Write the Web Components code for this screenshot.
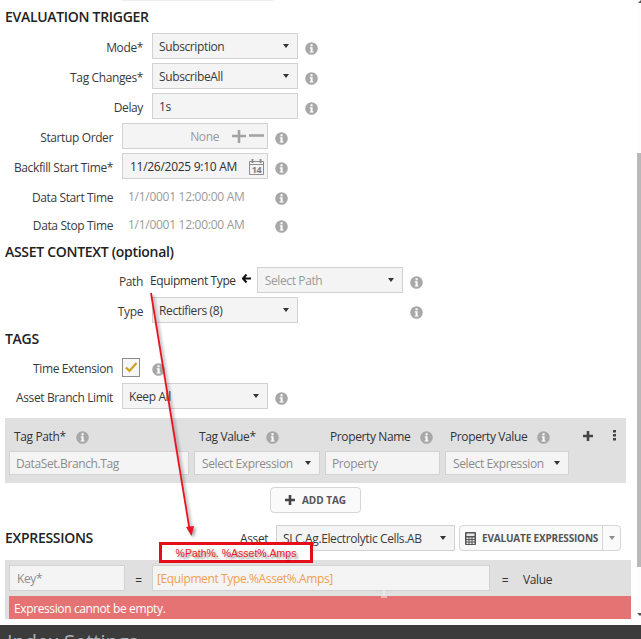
<!DOCTYPE html>
<html>
<head>
<meta charset="utf-8">
<title>Evaluation trigger</title>
<style>
  html, body { margin: 0; padding: 0; background: #fff; }
  body { width: 641px; height: 639px; overflow: hidden; }
</style>
</head>
<body>
<form-app></form-app>

<template id="form-app-tpl">
  <style>
    :host {
      display: flex;
      flex-direction: column;
      position: relative;
      width: 641px;
      height: 639px;
      overflow: hidden;
      background: #fff;
      color: #333;
      font: 12px/16px "Open Sans", "Noto Sans", sans-serif;
      letter-spacing: -0.38px;
    }
    .top { display: flex; height: 625px; }
    .main { width: 637px; }
    .edge { width: 151px; height: 1px; margin-left: 122px; background: #ececec; }
    .g4 { margin-top: 4px; }
    .value { width: 146px; padding-left: 6px; box-sizing: border-box; color: #9a9a9a; letter-spacing: -0.28px; position: relative; top: 1px; }
    .path-text { margin-left: -2px; white-space: nowrap; color: #333; position: relative; top: 1px; }
    .arrow { margin: -4px 6px 0 6px; flex: none; }
    .expr-row { display: flex; align-items: center; height: 26px; margin: 12px 0 0 5px; }
    .expr-row form-heading { width: 235px; margin: 0; }
    .asset { width: 36px; position: relative; top: 1px; }
    .tools { display: flex; justify-content: center; width: 621px; margin: 4px 0 0 5px; }
    .none { margin-right: 12px; color: #999; }
    .stepper { flex: none; margin-right: -2px; }
    .cal { flex: none; margin-right: -2px; }
    .check { width: 18px; height: 19px; box-sizing: border-box; border: 1px solid #8c8c8c; background: #f7f7f7; display: flex; align-items: center; justify-content: center; }
  </style>
  <div class="top">
    <div class="main">
      <div class="edge"></div>
      <form-heading style="margin-top:6px">EVALUATION TRIGGER</form-heading>

      <form-row label="Mode*" style="margin-top:6px"><field-box caret>Subscription</field-box><info-icon></info-icon></form-row>
      <form-row label="Tag Changes*" class="g4"><field-box caret>SubscribeAll</field-box><info-icon></info-icon></form-row>
      <form-row label="Delay" class="g4"><field-box>1s</field-box><info-icon></info-icon></form-row>
      <form-row narrow label="Startup Order" class="g4">
        <field-box end>
          <span class="none">None</span>
          <svg class="stepper" width="34" height="16" viewBox="0 0 34 16"><path d="M1 7h14M8 1v13" stroke="#a3a3a3" stroke-width="2.6" fill="none"/><path d="M18 6.5h15" stroke="#a3a3a3" stroke-width="2.6" fill="none"/></svg>
        </field-box>
        <info-icon></info-icon>
      </form-row>
      <form-row narrow label="Backfill Start Time*" class="g4">
        <field-box style="--text:#2f2f2f;--pad:7px;letter-spacing:-0.28px" end>
          <span style="margin-right:auto">11/26/2025 9:10 AM</span>
          <svg class="cal" width="17" height="18" viewBox="0 0 17 18"><path d="M1.5 3.5h14v13h-14z M1.5 6.5h14" fill="#f4f4f4" stroke="#8d8d8d"/><path d="M4.5 1v4M12.5 1v4" stroke="#8d8d8d" stroke-width="2"/><text x="8.5" y="15" text-anchor="middle" font-size="9" font-weight="700" font-family="Open Sans, sans-serif" fill="#7d7d7d">14</text></svg>
        </field-box>
        <info-icon></info-icon>
      </form-row>
      <form-row narrow label="Data Start Time" style="margin-top:4px"><span class="value">1/1/0001 12:00:00 AM</span><info-icon></info-icon></form-row>
      <form-row narrow label="Data Stop Time" style="margin-top:2px"><span class="value">1/1/0001 12:00:00 AM</span><info-icon></info-icon></form-row>

      <form-heading style="margin-top:5px">ASSET CONTEXT (optional)</form-heading>
      <form-row label="Path" style="margin-top:5px">
        <span class="path-text">Equipment Type</span>
        <svg class="arrow" width="9" height="9" viewBox="0 0 9 9"><path d="M4.5 .5 1 4.5l3.5 4M1.5 4.5H9" fill="none" stroke="#111" stroke-width="2"/></svg>
        <field-box caret style="--text:#9a9a9a;--pad:7px">Select Path</field-box><info-icon></info-icon>
      </form-row>
      <form-row label="Type" class="g4"><field-box caret>Rectifiers (8)</field-box><info-icon style="margin-left:112px"></info-icon></form-row>

      <form-heading style="margin-top:6px">TAGS</form-heading>
      <form-row narrow label="Time Extension" style="margin-top:5px">
        <div class="check"><svg width="14" height="12" viewBox="0 0 14 12"><path d="M2 6.5 5.5 10 12.5 2" fill="none" stroke="#cfa214" stroke-width="2.2"/></svg></div>
        <info-icon style="margin-left:12px"></info-icon>
      </form-row>
      <form-row narrow label="Asset Branch Limit" style="margin-top:3px"><field-box caret>Keep All</field-box><info-icon></info-icon></form-row>

      <tag-panel style="margin-top:9px">
        <tag-col label="Tag Path*"><field-box style="--h:24px;--text:#8c8c8c">DataSet.Branch.Tag</field-box></tag-col>
        <tag-col label="Tag Value*"><field-box caret style="--h:24px;--text:#8c8c8c;--pad:7px">Select Expression</field-box></tag-col>
        <tag-col label="Property Name"><field-box style="--h:24px;--text:#8c8c8c">Property</field-box></tag-col>
        <tag-col label="Property Value"><field-box caret style="--h:24px;--text:#8c8c8c;--pad:7px">Select Expression</field-box></tag-col>
      </tag-panel>

      <div class="tools"><add-button>ADD TAG</add-button></div>

      <div class="expr-row">
        <form-heading>EXPRESSIONS</form-heading>
        <span class="asset">Asset</span>
        <field-box caret style="--w:179px">SLC.Ag.Electrolytic Cells.AB</field-box>
        <split-button style="margin-left:4px">EVALUATE EXPRESSIONS</split-button>
      </div>

      <expr-panel style="margin-top:9px">Expression cannot be empty.</expr-panel>
    </div>
    <fake-scrollbar></fake-scrollbar>
  </div>
  <app-footer></app-footer>

  <callout-arrow></callout-arrow>
  <callout-box>%Path%. %Asset%.Amps</callout-box>
</template>

<script>
function makeShadow(el, html) {
  el.attachShadow({ mode: 'open' });
  el.shadowRoot.innerHTML = html;
}

class FormApp extends HTMLElement {
  constructor() {
    super();
    this.attachShadow({ mode: 'open' });
    this.shadowRoot.appendChild(document.getElementById('form-app-tpl').content.cloneNode(true));
  }
}

class FormHeading extends HTMLElement {
  constructor() {
    super();
    makeShadow(this, `
      <style>
        :host { display: block; height: 20px; margin-left: 5px; font-size: 14px; line-height: 20px; font-weight: 600; color: #222; letter-spacing: -0.3px; white-space: nowrap; }
      </style>
      <slot></slot>`);
  }
}

class FormRow extends HTMLElement {
  constructor() {
    super();
    makeShadow(this, `
      <style>
        :host { display: flex; align-items: center; height: 26px; --label-w: 143px; white-space: nowrap; }
        :host([narrow]) { --label-w: 113px; }
        .label { width: var(--label-w); margin-right: 9px; flex: none; text-align: right; color: #3a3a3a; position: relative; top: 2px; }
      </style>
      <span class="label"></span>
      <slot></slot>`);
    this.shadowRoot.querySelector('.label').textContent = this.getAttribute('label');
  }
}

class FieldBox extends HTMLElement {
  constructor() {
    super();
    makeShadow(this, `
      <style>
        :host {
          display: flex;
          align-items: center;
          flex: none;
          box-sizing: border-box;
          width: var(--w, 146px);
          height: var(--h, 26px);
          padding: 2px var(--pad-r, 6px) 0 var(--pad, 6px);
          background: #f4f4f4;
          border: 1px solid #d2d2d2;
          color: var(--text, #3a3a3a);
          white-space: nowrap;
          overflow: hidden;
        }
        :host([end]) { justify-content: flex-end; }
        :host([end]) { --pad-r: 4px; }
        .text { flex: 1; display: flex; align-items: center; justify-content: inherit; min-width: 0; }
        .caret { display: none; flex: none; width: 0; height: 0; margin: -2px 2px 0 4px; border: 3px solid transparent; border-top: 4px solid #333; border-bottom: 0; }
        :host([caret]) .caret { display: block; }
      </style>
      <div class="text"><slot></slot></div>
      <span class="caret"></span>`);
  }
}

class InfoIcon extends HTMLElement {
  constructor() {
    super();
    makeShadow(this, `
      <style>
        :host { display: block; flex: none; width: 13px; height: 13px; margin-left: 7px; position: relative; top: 2px; }
        svg { display: block; }
      </style>
      <svg width="13" height="13" viewBox="0 0 13 13">
        <circle cx="6.5" cy="6.5" r="6.3" fill="#a8a8a8"/>
        <rect x="5.5" y="2.3" width="2.1" height="2" fill="#fff"/>
        <path d="M4.8 5.3h2.8v4.1h.9v1.1H4.7V9.4h.9V6.4h-.8z" fill="#fff"/>
      </svg>`);
  }
}

class TagPanel extends HTMLElement {
  constructor() {
    super();
    makeShadow(this, `
      <style>
        :host { display: grid; grid-template-columns: 180px 126px 115px 124px 1fr; column-gap: 5px; box-sizing: border-box; width: 621px; height: 65px; margin-left: 5px; padding: 9px 0 8px 4px; background: #e0e0e0; }
        .actions { display: flex; align-items: flex-start; padding: 4px 0 0 9px; }
        .dots { margin-left: 20px; margin-top: -1px; }
      </style>
      <slot></slot>
      <div class="actions">
        <svg width="10" height="10" viewBox="0 0 10 10"><path d="M0 5h10M5 0v10" stroke="#444" stroke-width="2.6"/></svg>
        <svg class="dots" width="3" height="11" viewBox="0 0 3 11"><path d="M0 0h3v2.6H0zM0 4h3v2.6H0zM0 8h3v2.6H0z" fill="#444"/></svg>
      </div>`);
  }
}

class TagCol extends HTMLElement {
  constructor() {
    super();
    makeShadow(this, `
      <style>
        :host { display: block; white-space: nowrap; }
        .head { display: flex; align-items: center; height: 18px; margin-bottom: 6px; padding-left: 5px; color: #333; }
        .name { position: relative; top: 1px; }
        info-icon { margin-left: 10px; top: 1px; }
        ::slotted(field-box) { width: 100%; }
      </style>
      <div class="head"><span class="name"></span><info-icon></info-icon></div>
      <slot></slot>`);
    this.shadowRoot.querySelector('.name').textContent = this.getAttribute('label');
  }
}

class AddButton extends HTMLElement {
  constructor() {
    super();
    makeShadow(this, `
      <style>
        :host { display: flex; align-items: center; justify-content: center; gap: 7px; box-sizing: border-box; width: 91px; height: 26px; background: #fafafa; border: 1px solid #d6d6d6; border-radius: 4px; font-size: 10px; font-weight: 700; color: #555; letter-spacing: 0; }
      </style>
      <svg width="10" height="10" viewBox="0 0 10 10"><path d="M0 5h10M5 0v10" stroke="#444" stroke-width="2.6"/></svg>
      <slot></slot>`);
  }
}

class SplitButton extends HTMLElement {
  constructor() {
    super();
    makeShadow(this, `
      <style>
        :host { display: flex; align-items: stretch; flex: none; box-sizing: border-box; width: 162px; height: 26px; background: #fafafa; border: 1px solid #d6d6d6; border-radius: 4px; font-size: 10px; font-weight: 700; color: #555; letter-spacing: -0.18px; white-space: nowrap; }
        .main { display: flex; align-items: center; gap: 6px; width: 143px; padding-left: 5px; box-sizing: border-box; border-right: 1px solid #d6d6d6; }
        .drop { flex: 1; display: flex; align-items: center; justify-content: center; }
        .drop i { width: 0; height: 0; border: 3.5px solid transparent; border-top: 4px solid #8d8d8d; border-bottom: 0; }
        svg { flex: none; }
      </style>
      <div class="main">
        <svg width="11" height="13" viewBox="0 0 11 13"><rect width="11" height="13" rx="1" fill="#555"/><rect x="1.5" y="1.5" width="8" height="2.5" fill="#e8e8e8"/><path d="M1.5 5.5h2v1.6h-2zM4.5 5.5h2v1.6h-2zM7.5 5.5h2v1.6h-2zM1.5 8h2v1.6h-2zM4.5 8h2v1.6h-2zM7.5 8h2v1.6h-2zM1.5 10.5h2v1.4h-2zM4.5 10.5h2v1.4h-2zM7.5 10.5h2v1.4h-2z" fill="#e8e8e8"/></svg>
        <span><slot></slot></span>
      </div>
      <div class="drop"><i></i></div>`);
  }
}

class ExprPanel extends HTMLElement {
  constructor() {
    super();
    makeShadow(this, `
      <style>
        :host { display: block; box-sizing: border-box; width: 626px; margin-left: 5px; padding-left: 4px; background: #e0e0e0; white-space: nowrap; }
        .row { display: flex; align-items: center; height: 36px; }
        .eq { flex: none; text-align: center; position: relative; top: 3px; }
        .val { margin-left: 3px; position: relative; top: 2px; }
        .orange { --text: #f2a04e; }
        .err { display: flex; align-items: center; height: 23px; padding: 3px 0 0 5px; box-sizing: border-box; background: #e57373; color: #fff; font-size: 12px; }
      </style>
      <div class="row">
        <field-box style="--w:116px;--text:#8c8c8c;--pad:7px">Key*</field-box>
        <span class="eq" style="width:27px">=</span>
        <field-box class="orange" style="--w:338px;--pad:4px">[Equipment Type.%Asset%.Amps]</field-box>
        <span class="eq" style="width:30px">=</span>
        <span class="val">Value</span>
      </div>
      <div class="err"><slot></slot></div>`);
  }
}

class FakeScrollbar extends HTMLElement {
  constructor() {
    super();
    makeShadow(this, `
      <style>
        :host { display: flex; flex-direction: column; width: 4px; height: 619px; background: #fdfdfd; }
        .up { width: 0; height: 0; margin: 0 0 0 1px; border: 3px solid transparent; border-top: 0; border-bottom: 3px solid #555; }
        .thumb { width: 4px; height: 414px; margin-top: 150px; background: #b8b8b8; }
        .down { width: 0; height: 0; margin: 46px 0 0 0; border: 3px solid transparent; border-bottom: 0; border-top: 3px solid #555; }
      </style>
      <i class="up"></i>
      <div class="thumb"></div>
      <i class="down"></i>`);
  }
}

class AppFooter extends HTMLElement {
  constructor() {
    super();
    makeShadow(this, `
      <style>
        :host { display: block; height: 14px; overflow: hidden; background: #3c3c3c; color: #a9b2ba; font-size: 20px; line-height: 34px; padding-left: 7px; box-sizing: border-box; white-space: nowrap; letter-spacing: 0; }
      </style>
      <span>Index Settings</span>`);
  }
}

class CalloutArrow extends HTMLElement {
  constructor() {
    super();
    makeShadow(this, `
      <style>
        :host { position: absolute; left: 0; top: 0; width: 641px; height: 639px; pointer-events: none; }
        svg { display: block; }
        .shot { filter: drop-shadow(2px 2px 1.5px rgba(0,0,0,.38)); }
      </style>
      <svg width="641" height="639" viewBox="0 0 641 639">
        <g class="shot">
          <path d="M151 293 189.5 529" stroke="#ea1320" stroke-width="1.8" fill="none"/>
          <path d="M186 527 194 526 191.5 536z" fill="#ea1320"/>
        </g>
        <path d="M384 582v14M381 597h6" stroke="#f4f4f4" stroke-width="1" fill="none"/>
      </svg>`);
  }
}

class CalloutBox extends HTMLElement {
  constructor() {
    super();
    makeShadow(this, `
      <style>
        :host { position: absolute; left: 159px; top: 542px; width: 154px; height: 21px; box-sizing: border-box; border: 3px solid #e40d18; background: #fff; display: flex; align-items: center; justify-content: center; color: #ee1c25; font: 10.5px "Liberation Sans", sans-serif; letter-spacing: 0; text-shadow: 2px 2px 2px rgba(0,0,0,.45); white-space: nowrap; }
      </style>
      <slot></slot>`);
  }
}

customElements.define('form-heading', FormHeading);
customElements.define('form-row', FormRow);
customElements.define('field-box', FieldBox);
customElements.define('info-icon', InfoIcon);
customElements.define('tag-panel', TagPanel);
customElements.define('tag-col', TagCol);
customElements.define('add-button', AddButton);
customElements.define('split-button', SplitButton);
customElements.define('expr-panel', ExprPanel);
customElements.define('fake-scrollbar', FakeScrollbar);
customElements.define('app-footer', AppFooter);
customElements.define('callout-arrow', CalloutArrow);
customElements.define('callout-box', CalloutBox);
customElements.define('form-app', FormApp);
</script>
</body>
</html>
